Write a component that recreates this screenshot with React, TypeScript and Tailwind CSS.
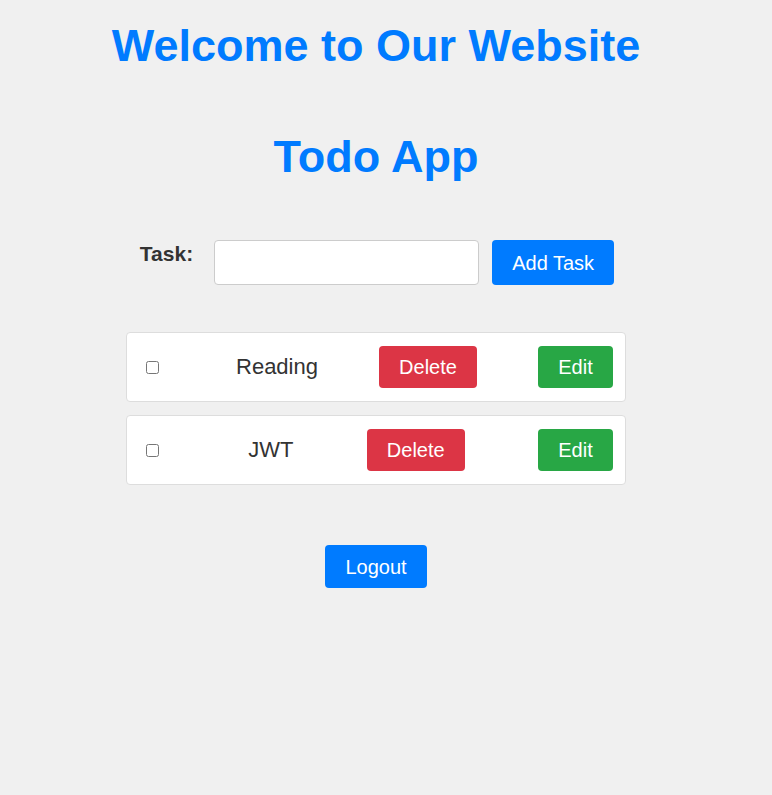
import { useState } from "react";

type Task = { id: number; text: string; done: boolean };

export default function App() {
  const [tasks, setTasks] = useState<Task[]>([
    { id: 1, text: "Reading", done: false },
    { id: 2, text: "JWT", done: false },
  ]);
  const [draft, setDraft] = useState("");

  const addTask = () => {
    if (!draft.trim()) return;
    setTasks([...tasks, { id: Date.now(), text: draft.trim(), done: false }]);
    setDraft("");
  };

  return (
    <div className="min-h-screen bg-[#f0f0f0] font-['Liberation_Sans',Arial,sans-serif]">
      <div className="flex w-[752px] flex-col items-center">
        <h1 className="mt-[21px] text-[45px] font-bold leading-[50px] text-[#007bff]">
          Welcome to Our Website
        </h1>

        <h2 className="mt-[61px] text-[45px] font-bold leading-[50px] text-[#007bff]">Todo App</h2>

        <div className="ml-[2px] mt-[58px] flex items-start">
          <label className="mt-[3px] text-[21px] font-bold leading-[21px] text-[#333]">Task:</label>
          <input
            value={draft}
            onChange={(e) => setDraft(e.target.value)}
            className="ml-[21px] h-[45px] w-[265px] rounded-[4px] border border-[#ccc] bg-white px-2 text-[18px] outline-none"
          />
          <button
            onClick={addTask}
            className="ml-[13px] h-[45px] w-[122px] rounded-[4px] bg-[#007bff] text-[20px] text-white"
          >
            Add Task
          </button>
        </div>

        <ul className="mt-[47px] flex w-[500px] flex-col gap-[13px]">
          {tasks.map((t) => (
            <li
              key={t.id}
              className="flex h-[70px] items-center justify-between rounded-[4px] border border-[#ddd] bg-white pl-[15px] pr-[12px]"
            >
              <input
                type="checkbox"
                checked={t.done}
                onChange={() =>
                  setTasks(tasks.map((x) => (x.id === t.id ? { ...x, done: !x.done } : x)))
                }
                className="ml-[4px] mr-[16px] h-[13px] w-[13px]"
              />
              <span className="text-[22px] leading-[24px] text-[#333]">{t.text}</span>
              <button
                onClick={() => setTasks(tasks.filter((x) => x.id !== t.id))}
                className="h-[42px] w-[98px] rounded-[4px] bg-[#dc3545] text-[20px] text-white"
              >
                Delete
              </button>
              <button className="h-[42px] w-[75px] rounded-[4px] bg-[#28a745] text-[20px] text-white">
                Edit
              </button>
            </li>
          ))}
        </ul>

        <button className="mt-[60px] h-[43px] w-[102px] rounded-[4px] bg-[#007bff] text-[20px] text-white">
          Logout
        </button>
      </div>
    </div>
  );
}
